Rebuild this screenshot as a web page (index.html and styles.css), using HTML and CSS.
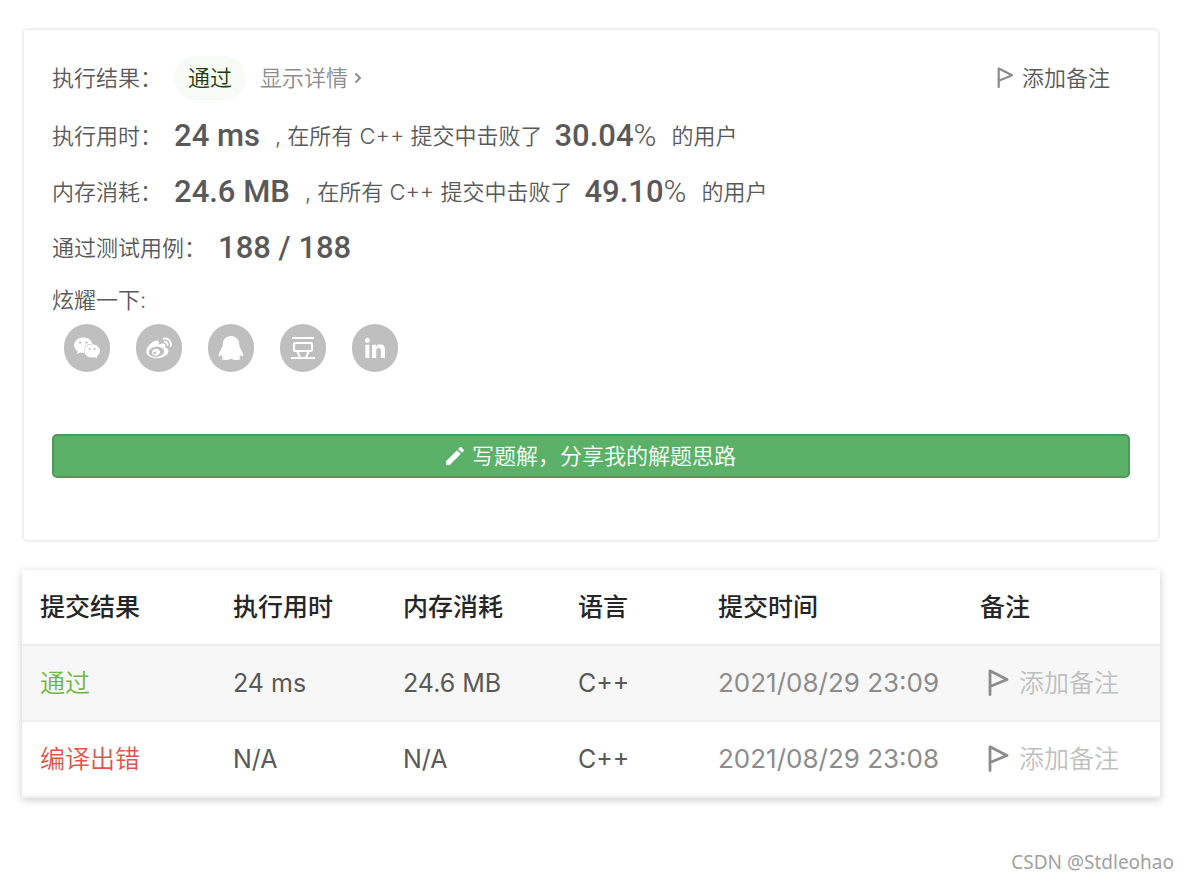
FILE: index.html
```html
<!DOCTYPE html>
<html lang="zh-CN">
<head>
<meta charset="utf-8">
<meta name="viewport" content="width=device-width, initial-scale=1">
<title>提交记录</title>
<link rel="stylesheet" href="styles.css">
</head>
<body>
<svg class="defs" aria-hidden="true">
  <symbol id="flag" viewBox="0 0 22 28"><path d="M3 25.500V1.800L20 10.500 3 17.500" fill="none" stroke="currentColor" stroke-width="2.800" stroke-linejoin="round" stroke-linecap="round"/></symbol>
</svg>
<main class="page">
  <section class="card">
    <div class="row row-first">
      <span class="label">执行结果：</span>
      <span class="pill">通过</span>
      <a class="detail" href="#">显示详情
        <svg class="chevron" viewBox="0 0 8 12"><path d="M1.500 1.500 6 6 1.500 10.500" fill="none" stroke="currentColor" stroke-width="2"/></svg>
      </a>
      <button class="note-btn" type="button"><svg class="flag-small"><use href="#flag"/></svg>添加备注</button>
    </div>
    <div class="row">
      <span class="label">执行用时：</span>
      <strong class="value">24 ms</strong>
      <span class="text">, 在所有 C++ 提交中击败了</span>
      <strong class="value">30.04<span class="percent">%</span></strong>
      <span class="text">的用户</span>
    </div>
    <div class="row">
      <span class="label">内存消耗：</span>
      <strong class="value">24.6 MB</strong>
      <span class="text">, 在所有 C++ 提交中击败了</span>
      <strong class="value">49.10<span class="percent">%</span></strong>
      <span class="text">的用户</span>
    </div>
    <div class="row">
      <span class="label">通过测试用例：</span>
      <strong class="value">188 / 188</strong>
    </div>
    <div class="share-title">炫耀一下:</div>
    <div class="share">
      <button class="share-btn" type="button" aria-label="微信"><svg class="share-icon" viewBox="0 0 576 512"><path d="M385.200 167.600c6.400 0 12.600.3 18.800 1.100C387.400 90.300 303.300 32 207.700 32 100.500 32 13 104.800 13 197.400c0 53.400 29.300 97.500 77.900 131.600l-19.300 58.600 68-34.100c24.400 4.800 43.800 9.700 68.200 9.700 6.200 0 12.100-.3 18.300-.8-4-12.900-6.200-26.600-6.200-40.800-.1-84.900 72.900-154 165.300-154zm-104.500-52.900c14.500 0 24.200 9.700 24.200 24.400 0 14.500-9.700 24.200-24.200 24.200-14.800 0-29.300-9.700-29.300-24.200.1-14.700 14.600-24.400 29.300-24.400zm-136.400 48.600c-14.500 0-29.300-9.700-29.300-24.200 0-14.800 14.800-24.400 29.300-24.400 14.800 0 24.400 9.700 24.400 24.400 0 14.600-9.600 24.200-24.400 24.200zM563 319.400c0-77.900-77.900-141.300-165.400-141.300-92.700 0-165.400 63.400-165.400 141.300S305 460.700 397.600 460.700c19.300 0 38.900-5.100 58.600-9.900l53.400 29.300-14.800-48.600C534 402.100 563 363.200 563 319.400zm-219.100-24.500c-9.700 0-19.300-9.700-19.300-19.600 0-9.700 9.700-19.300 19.300-19.300 14.800 0 24.400 9.700 24.400 19.300 0 10-9.700 19.600-24.400 19.600zm107.100 0c-9.700 0-19.300-9.700-19.300-19.600 0-9.700 9.700-19.300 19.300-19.300 14.500 0 24.400 9.700 24.400 19.300.1 10-9.900 19.600-24.400 19.600z"/></svg></button>
      <button class="share-btn" type="button" aria-label="微博"><svg class="share-icon" viewBox="0 0 512 480"><path d="M407 177.600c7.600-24-13.400-46.800-37.400-41.700-22 4.800-28.800-28.100-7.100-32.800 50.100-10.900 92.300 37.100 76.500 84.800-6.800 21.200-38.800 10.800-32-10.300zM214.800 446.700C108.500 446.700 0 395.300 0 310.400c0-44.300 28-95.400 76.300-143.700C176 67 279.500 65.800 249.900 161c-4 13.100 12.300 5.700 12.300 6 79.500-33.600 140.500-16.800 114 51.400-3.700 9.400 1.100 10.900 8.300 13.100 135.700 42.300 34.800 215.200-169.700 215.200zm143.700-146.300c-5.400-55.700-78.500-94-163.400-85.700-84.800 8.600-148.800 60.300-143.400 116s78.500 94 163.400 85.700c84.800-8.600 148.800-60.300 143.400-116zM347.900 35.100c-25.900 5.600-16.800 43.700 8.300 38.300 72.300-15.200 134.800 52.800 111.700 124-7.400 24.200 29.100 37 37.400 12 31.900-99.800-55.100-195.900-157.400-174.300zm-78.500 311c-17.100 38.800-66.800 60-109.100 46.300-40.800-13.100-58-53.400-40.300-89.700 17.700-35.400 63.100-55.400 103.400-45.100 42 10.800 63.100 50.200 46 88.500zm-86.300-30c-12.900-5.400-30 .3-38 12.900-8.300 12.900-4.300 28 8.600 34 13.100 6 30.800.3 39.100-12.900 8-13.100 3.700-28.300-9.700-34zm32.600-13.400c-5.100-1.700-11.400.6-14.300 5.400-2.900 5.100-1.400 10.600 3.700 12.900 5.100 2 11.700-.3 14.600-5.400 2.800-5.200 1.100-10.900-4-12.900z"/></svg></button>
      <button class="share-btn" type="button" aria-label="QQ"><svg class="share-icon" viewBox="0 0 28 24"><path d="M14 0C9 0 5.700 3.600 5.700 8.500v1.300C4.700 11 4.900 12.300 4 13.700 2.200 16.400 1 19.300 2.200 20.200c.6.300 1.400-.4 2.100-1.500.3 1.200.9 2.200 1.800 3C4.600 22 4 22.800 5.500 23.500c2.300 1 6.300.5 8.500-.8 2.200 1.300 6.200 1.800 8.500.8 1.500-.7.900-1.500-.6-1.800.9-.8 1.500-1.800 1.800-3 .7 1.100 1.500 1.800 2.100 1.500 1.200-.9 0-3.800-1.800-6.500-.9-1.400-.7-2.700-1.700-3.900V8.500C22.300 3.600 19 0 14 0z"/></svg></button>
      <button class="share-btn" type="button" aria-label="豆瓣"><svg class="share-icon" viewBox="0 0 28 24"><path d="M3 2h22M2 22h24M8.500 16 11 21M19.500 16 17 21" fill="none" stroke="currentColor" stroke-width="2"/><rect x="5" y="7" width="18" height="8" rx="1.500" fill="none" stroke="currentColor" stroke-width="2.200"/></svg></button>
      <button class="share-btn" type="button" aria-label="LinkedIn"><svg class="share-icon share-icon-small" viewBox="0 0 448 448"><path d="M100.280 448H7.400V148.900h92.880zM53.790 108.100C24.090 108.100 0 83.500 0 53.800a53.790 53.790 0 0 1 107.580 0c0 29.700-24.100 54.300-53.790 54.300zM447.900 448h-92.680V302.400c0-34.700-.7-79.200-48.290-79.200-48.290 0-55.690 37.700-55.690 76.700V448h-92.780V148.900h89.080v40.800h1.300c12.400-23.500 42.690-48.300 87.880-48.300 94 0 111.280 61.900 111.280 142.300V448z"/></svg></button>
    </div>
    <button class="write-btn" type="button"><svg class="pencil" viewBox="3 3 18 18"><path d="M3 17.250V21h3.750L17.810 9.940l-3.750-3.750L3 17.250zM20.710 7.040a1 1 0 0 0 0-1.410l-2.340-2.340a1 1 0 0 0-1.410 0l-1.830 1.830 3.750 3.750 1.830-1.830z"/></svg>写题解，分享我的解题思路</button>
  </section>

  <table class="history">
    <colgroup><col class="c-result"><col class="c-time"><col class="c-memory"><col class="c-lang"><col class="c-date"><col class="c-note"></colgroup>
    <thead>
      <tr><th>提交结果</th><th>执行用时</th><th>内存消耗</th><th>语言</th><th>提交时间</th><th>备注</th></tr>
    </thead>
    <tbody>
      <tr class="active">
        <td><a class="pass" href="#">通过</a></td><td>24 ms</td><td>24.6 MB</td><td>C++</td><td class="date">2021/08/29 23:09</td>
        <td><button class="cell-note" type="button"><svg class="flag"><use href="#flag"/></svg>添加备注</button></td>
      </tr>
      <tr>
        <td><a class="fail" href="#">编译出错</a></td><td>N/A</td><td>N/A</td><td>C++</td><td class="date">2021/08/29 23:08</td>
        <td><button class="cell-note" type="button"><svg class="flag"><use href="#flag"/></svg>添加备注</button></td>
      </tr>
    </tbody>
  </table>
</main>
<footer class="credit">CSDN @Stdleohao</footer>
</body>
</html>
```

FILE: styles.css
```css
* { box-sizing: border-box; }

body {
  margin: 0;
  background: #fff;
  color: #595959;
  font-family: Inter, "Noto Sans CJK SC", sans-serif;
  font-size: 22px;
  font-weight: 350;
  line-height: 32px;
}

button {
  border: 0;
  padding: 0;
  background: none;
  color: inherit;
  font: inherit;
  cursor: pointer;
}

a { color: inherit; text-decoration: none; }
svg { flex: none; fill: currentColor; }
.defs { position: absolute; width: 0; height: 0; }

.page { padding: 28px 28px 0 22px; }

.card {
  border: 2px solid #efefef;
  border-radius: 6px;
  padding: 20px 28px 62px;
}

.row {
  display: flex;
  align-items: center;
  height: 56px;
  white-space: nowrap;
}

.row-first { margin-bottom: 2px; }
.label { margin-right: 12px; }

.pill {
  padding: 6px 14px;
  border-radius: 22px;
  background: #f8faf5;
  color: #1f3d0c;
}

.detail {
  display: flex;
  align-items: center;
  gap: 6px;
  margin-left: 14px;
  color: #8c8c8c;
}

.chevron { width: 8px; height: 12px; }

.note-btn {
  display: flex;
  align-items: center;
  gap: 8px;
  margin-left: auto;
  margin-right: 20px;
}

.flag-small { width: 18px; height: 22px; color: #8c8c8c; }

.value {
  font-family: Roboto, sans-serif;
  font-size: 31px;
  font-weight: 500;
}

.percent { font-weight: 300; }

.text { margin: 0 12px 0 15px; }

.share-title { margin-top: 8px; }

.share {
  display: flex;
  gap: 26px;
  margin: 8px 12px 62px;
}

.share-btn {
  display: flex;
  align-items: center;
  justify-content: center;
  width: 46px;
  height: 48px;
  border-radius: 23px;
  background: #bfbfbf;
  color: #fff;
}

.share-icon { width: 28px; height: 24px; }
.share-icon-small { width: 20px; height: 20px; }

.write-btn {
  display: flex;
  align-items: center;
  justify-content: center;
  gap: 8px;
  width: 100%;
  height: 44px;
  border: 2px solid #4f9a5a;
  border-radius: 5px;
  background: #5bb168;
  color: #fff;
}

.pencil { width: 18px; height: 18px; }

.history {
  width: 100%;
  margin-top: 28px;
  border-collapse: separate;
  border-spacing: 0;
  table-layout: fixed;
  box-shadow: 0 2px 8px rgba(0, 0, 0, 0.2);
  font-size: 25px;
}

.c-result { width: 193px; }
.c-time { width: 170px; }
.c-memory { width: 175px; }
.c-lang { width: 140px; }
.c-date { width: 262px; }
.c-note { width: 198px; }

.history th,
.history td {
  height: 76px;
  padding: 0 18px;
  border-bottom: 2px solid #efefef;
  text-align: left;
  white-space: nowrap;
}

.history th { color: #262626; font-weight: 500; }
.history td { font-weight: 400; }
.active { background: #f7f7f7; }

.pass,
.fail,
.cell-note { font-weight: 350; }

.pass { color: #6fb83f; }
.fail { color: #e0544c; }
.history .date { color: #8c8c8c; font-size: 26px; }

.cell-note {
  display: flex;
  align-items: center;
  gap: 10px;
  margin-left: 7px;
  color: #bfbfbf;
}

.flag { width: 22px; height: 28px; color: #8c8c8c; }

.credit {
  padding: 48px 14px 0;
  color: #a0a0a0;
  font-family: "Noto Sans", sans-serif;
  font-size: 19px;
  font-weight: 400;
  text-align: right;
}
```
